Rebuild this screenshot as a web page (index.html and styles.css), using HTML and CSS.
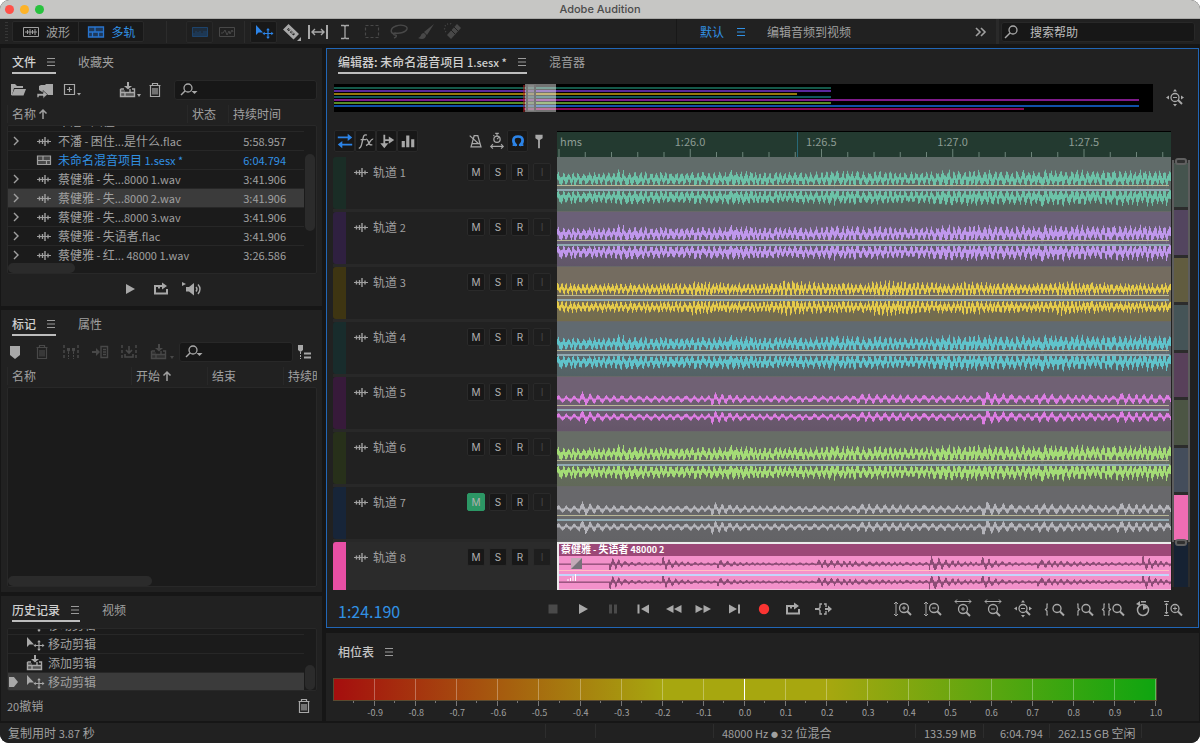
FILE: index.html
```html
<!DOCTYPE html>
<html lang="zh-CN">
<head>
    <meta charset="UTF-8">
    <meta name="viewport" content="width=device-width, initial-scale=1.0">
    <title>Adobe Audition</title>
    <link rel="stylesheet" href="styles.css">
</head>
<body>
    <!-- Icon sprite -->
    <svg class="sprite" aria-hidden="true">
        <symbol id="i-wavebox" viewBox="0 0 20 20"><path d="M2.500 5.500h15v9h-15zM4 10h12M6.500 8v4M9 7v6M11.500 8v4M14 7v6" fill="none" stroke="currentColor"/></symbol>
        <symbol id="i-multitrack" viewBox="0 0 20 20"><path d="M2.500 5h15v10h-15z" fill="currentColor" opacity=".35"/><path d="M2.500 5h15v10h-15zM2.500 10h15M9 5v5M6.500 10v5M12.500 10v5" fill="none" stroke="currentColor" stroke-width="1.300"/></symbol>
        <symbol id="i-session" viewBox="0 0 20 20"><path d="M3.500 6h13v8.500h-13z" fill="currentColor" opacity=".35"/><path d="M3.500 6h13v8.500h-13zM3.500 10.500h13M9 6v4M12.500 10v4" fill="none" stroke="currentColor" stroke-width="1.200"/></symbol>
        <symbol id="i-spectral" viewBox="0 0 20 20"><path d="M2 5h16v10H2z" fill="currentColor" opacity=".4"/><path d="M2.500 5.500h15v9h-15zM4 14v-3M6 14V9M8 14v-4M10 14V9M12 14v-3M14 14V9M16 14v-5" fill="none" stroke="currentColor"/></symbol>
        <symbol id="i-pitch" viewBox="0 0 20 20"><path d="M2.500 5.500h15v9h-15zM4 11h2l2-3 2 5 2-4 1 3 2-4 1 2" fill="none" stroke="currentColor"/></symbol>
        <symbol id="i-move" viewBox="0 0 20 20"><path d="M2 3v10l2.500-2.500H9z" fill="currentColor"/><path d="M14 7.500v8M10 11.500h8" stroke="currentColor" stroke-width="1.200"/><path d="M14 6l-1.800 2.200h3.600zM14 17l-1.800-2.200h3.600zM8.500 11.500l2.200-1.800v3.600zM19.500 11.500l-2.200-1.800v3.600z" fill="currentColor"/></symbol>
        <symbol id="i-razor" viewBox="0 0 20 20"><path fill-rule="evenodd" d="M7.500 2L18 12l-5.500 5.500L2 7.500zM7.500 6L6 7.500l6.500 6L14 12z" fill="currentColor"/><path d="M7.500 7l5 5M8 10l2-2M10.500 12l2-2" stroke="currentColor"/><path d="M20 15v4h-4z" fill="currentColor"/></symbol>
        <symbol id="i-slip" viewBox="0 0 20 20"><path d="M1 3v14M19 3v14" stroke="currentColor" stroke-width="2"/><path d="M4 10h12M7 7l-3 3 3 3M13 7l3 3-3 3" fill="none" stroke="currentColor" stroke-width="1.400"/></symbol>
        <symbol id="i-ibeam" viewBox="0 0 20 20"><path d="M6 3.500h3l1 1 1-1h3M10 4v12M6 16.500h3l1-1 1 1h3" fill="none" stroke="currentColor" stroke-width="1.300"/></symbol>
        <symbol id="i-marquee" viewBox="0 0 20 20"><path d="M3.500 3.500h13v12h-13z" fill="none" stroke="currentColor" stroke-width="1.200" stroke-dasharray="3 2"/></symbol>
        <symbol id="i-lasso" viewBox="0 0 20 20"><path d="M5 12C1 11 1 6 7 4s12 0 11 3-7 5-12 4c-2 0-2 2 0 2s2 2-1 3" fill="none" stroke="currentColor" stroke-width="1.400"/></symbol>
        <symbol id="i-brush" viewBox="0 0 20 20"><path d="M18 2L8 10l3 3zM8 11c-4 0-2 4-6 5 4 2 8 1 8-3z" fill="currentColor"/></symbol>
        <symbol id="i-heal" viewBox="0 0 20 20"><path d="M14 2l4 4L8 17l-4-4z" fill="currentColor"/><path d="M8 8l4 4M11 5l4 4" stroke="#212121"/><path d="M3 10a4 4 0 0 1 7-7" fill="none" stroke="currentColor" stroke-width="1.300" stroke-dasharray="1 2"/></symbol>
        <symbol id="i-menu" viewBox="0 0 10 10"><path d="M1 1.500h8M1 5h8M1 8.500h8" stroke="currentColor"/></symbol>
        <symbol id="i-folder" viewBox="0 0 20 20"><path d="M3 15V4h4l2 2h6v2H6l-2 7z" fill="currentColor"/><path d="M6.500 9H18l-2.500 6.500h-12z" fill="currentColor"/></symbol>
        <symbol id="i-import" viewBox="0 0 20 20"><path d="M4 10V6l2-1h4l1-1h7v11h-6z" fill="currentColor"/><path d="M2 17.500v-4h6v-3l4.500 4L8 18.500v-2.500H4v1.500z" fill="currentColor" stroke="#212121" stroke-width=".6"/></symbol>
        <symbol id="i-new" viewBox="0 0 20 20"><path d="M2.500 4.500h10v10h-10zM7.500 7v5M5 9.500h5" fill="none" stroke="currentColor" stroke-width="1.200"/><path d="M15 13h4l-2 2.500z" fill="currentColor"/></symbol>
        <symbol id="i-insert" viewBox="0 0 20 20"><path d="M9 2h2v4h3l-4 3.500L6 6h3z" fill="currentColor"/><path d="M2.500 9H6M14 9h2.500v7.500h-14V9M2.500 12.500h14M7 12v4M12 9v4" fill="none" stroke="currentColor" stroke-width="1.400"/><path d="M3 10h4v3h9v3H3z" fill="currentColor" opacity=".4"/></symbol>
        <symbol id="i-trash" viewBox="0 0 20 20"><path d="M4.500 5.500h11M7.500 5V3.500h5V5M5.500 6v10.500h9V6M8 8v6.500M10 8v6.500M12 8v6.500" fill="none" stroke="currentColor" stroke-width="1.200"/></symbol>
        <symbol id="i-search" viewBox="0 0 20 20"><circle cx="11" cy="8" r="4" fill="none" stroke="currentColor" stroke-width="1.300"/><path d="M8 11l-5 5" stroke="currentColor" stroke-width="1.500"/></symbol>
        <symbol id="i-searchdrop" viewBox="0 0 20 20"><circle cx="9" cy="8" r="4" fill="none" stroke="currentColor" stroke-width="1.300"/><path d="M6 11l-4 4" stroke="currentColor" stroke-width="1.500"/><path d="M12.500 11h6l-3 3z" fill="currentColor"/></symbol>
        <symbol id="i-wave" viewBox="0 0 20 20"><path d="M3 10.500h14" stroke="currentColor"/><path d="M5.500 8.500v4M8.500 8v5M11 6v9M14 8.500v4" stroke="currentColor" stroke-width="1.400"/></symbol>
        <symbol id="i-play" viewBox="0 0 20 20"><path d="M6 5l9 5-9 5z" fill="currentColor"/></symbol>
        <symbol id="i-loop" viewBox="0 0 20 20"><path d="M7 7H4v7.500h12V10" fill="none" stroke="currentColor" stroke-width="2"/><path d="M7 9.500V6h4V3.500L16 7l-5 3.500V8H9v1.500z" fill="currentColor"/></symbol>
        <symbol id="i-speaker" viewBox="0 0 20 20"><path d="M0 3l4 2-4 2zM4 8h3l5-4v12.500L7 12.500H4z" fill="currentColor"/><path d="M14 8q2 2 0 4.500M16 5.500q4 4.500 0 9.500" fill="none" stroke="currentColor" stroke-width="1.400"/></symbol>
        <symbol id="i-marker" viewBox="0 0 20 20"><path d="M5 4h10v9l-5 4-5-4z" fill="currentColor"/></symbol>
        <symbol id="i-markmerge" viewBox="0 0 20 20"><path d="M3 3v14M17 3v14" stroke="currentColor" stroke-width="1.500" stroke-dasharray="3 2"/><path d="M7.500 10v7M12.500 10v7" stroke="currentColor" stroke-dasharray="2 1"/><path d="M6 6h3v2.500L7.500 10 6 8.500zM11 6h3v2.500L12.500 10 11 8.500z" fill="currentColor"/></symbol>
        <symbol id="i-markinsert" viewBox="0 0 20 20"><path d="M2 9h4V6l4 4-4 4v-3H2z" fill="currentColor"/><path d="M11 4.500h6.500v11H11zM13 7.500h3M13 10h3M13 12.500h3" fill="none" stroke="currentColor" stroke-width="1.400"/></symbol>
        <symbol id="i-markexport" viewBox="0 0 20 20"><path d="M3 3v14M17 3v14" stroke="currentColor" stroke-width="1.500" stroke-dasharray="3 2"/><path d="M10 4v7M7 8l3 3 3-3M6 12v3h8v-3" fill="none" stroke="currentColor" stroke-width="1.600"/></symbol>
        <symbol id="i-marklist" viewBox="0 0 20 20"><path d="M3 3h5v5L5.500 10 3 8z" fill="currentColor"/><path d="M5.500 10v7" stroke="currentColor" stroke-dasharray="2 1"/><path d="M9 11.500h7M9 15.500h7" stroke="currentColor" stroke-width="2"/></symbol>
        <symbol id="i-swap" viewBox="0 0 20 20"><path d="M2 6h13M18 14H5" stroke="currentColor" stroke-width="2"/><path d="M13 2l5 4-5 4zM7 10l-5 4 5 4z" fill="currentColor"/></symbol>
        <symbol id="i-fx" viewBox="0 0 20 20"><path d="M2 18c3 0 3-4 4-8s1-8 5-6.500M4 8.500h6M10 8c3-1 2 8 7 6M18 8c-3-1-4 6-8 7" fill="none" stroke="currentColor" stroke-width="1.500"/></symbol>
        <symbol id="i-send" viewBox="0 0 20 20"><path d="M7 3v12M7 9h8" fill="none" stroke="currentColor" stroke-width="2"/><path d="M12 5l6 4-6 4zM2.500 12.500h9L7 18z" fill="currentColor"/></symbol>
        <symbol id="i-bars" viewBox="0 0 20 20"><path d="M3 10h3.500v7H3zM8 4h3.500v13H8zM13.500 8H17v9h-3.500z" fill="currentColor"/></symbol>
        <symbol id="i-metronome" viewBox="0 0 20 20"><path d="M8 4h4l3.500 12.500h-11zM6 13h8M3 4l10 9" fill="none" stroke="currentColor" stroke-width="1.400"/></symbol>
        <symbol id="i-timer" viewBox="0 0 20 20"><circle cx="10" cy="8" r="3.500" fill="none" stroke="currentColor" stroke-width="1.400"/><path d="M10 2v3M8 1.500h4M6 3.500l1 1M10 8l2-2M3 16h14M5.500 13.500L3 16l2.500 2.500M14.500 13.500L17 16l-2.500 2.500" fill="none" stroke="currentColor" stroke-width="1.200"/></symbol>
        <symbol id="i-magnet" viewBox="0 0 20 20"><path d="M8 15c-4-3-5-10 2-10s6 7 2 10" fill="none" stroke="currentColor" stroke-width="3"/><path d="M4 14.500h5M11 14.500h5" stroke="currentColor" stroke-width="2"/></symbol>
        <symbol id="i-pin" viewBox="0 0 20 20"><path d="M6 3h8v4L11 9v9H9V9L6 7z" fill="currentColor"/></symbol>
        <symbol id="i-stop" viewBox="0 0 20 20"><path d="M5.500 5.500h9v9h-9z" fill="currentColor"/></symbol>
        <symbol id="i-pause" viewBox="0 0 20 20"><path d="M6 5.500h3v9H6zM11 5.500h3v9h-3z" fill="currentColor"/></symbol>
        <symbol id="i-first" viewBox="0 0 20 20"><path d="M4.500 5.500h2v9h-2zM16 5.500v9L8 10z" fill="currentColor"/></symbol>
        <symbol id="i-rewind" viewBox="0 0 20 20"><path d="M10.500 6v8L3 10zM18.500 6v8l-7.500-4z" fill="currentColor"/></symbol>
        <symbol id="i-forward" viewBox="0 0 20 20"><path d="M2.500 6v8l7.500-4zM10.500 6v8l7.500-4z" fill="currentColor"/></symbol>
        <symbol id="i-last" viewBox="0 0 20 20"><path d="M6 5.500v9l8-4.500zM15 5.500h2v9h-2z" fill="currentColor"/></symbol>
        <symbol id="i-record" viewBox="0 0 20 20"><circle cx="11" cy="10" r="5.200" fill="currentColor"/></symbol>
        <symbol id="i-skip" viewBox="0 0 20 20"><path d="M9 5H7v3.500L5.500 10 7 11.500V15h2M11 5h2v3M11 15h2v-3" fill="none" stroke="currentColor" stroke-width="1.400"/><path d="M2 9h4v2H2zM12 9h3V6.500l4 3.500-4 3.500V11h-3z" fill="currentColor"/></symbol>
        <symbol id="i-vzoomin" viewBox="0 0 20 20"><path d="M3 3v14M1 5l2-2 2 2M1 15l2 2 2-2M9 9h4M11 7v4" fill="none" stroke="currentColor"/><circle cx="11" cy="9" r="4.500" fill="none" stroke="currentColor" stroke-width="1.300"/><path d="M14 12l4 4" stroke="currentColor" stroke-width="2"/></symbol>
        <symbol id="i-vzoomout" viewBox="0 0 20 20"><path d="M3 3v14M1 5l2-2 2 2M1 15l2 2 2-2M9 9h4" fill="none" stroke="currentColor"/><circle cx="11" cy="9" r="4.500" fill="none" stroke="currentColor" stroke-width="1.300"/><path d="M14 12l4 4" stroke="currentColor" stroke-width="2"/></symbol>
        <symbol id="i-hzoomin" viewBox="0 0 20 20"><path d="M2 2.500h16M4 .5l-2 2 2 2M16 .5l2 2-2 2M8 10h4M10 8v4" fill="none" stroke="currentColor"/><circle cx="10" cy="10" r="4.500" fill="none" stroke="currentColor" stroke-width="1.300"/><path d="M13 13l4 4" stroke="currentColor" stroke-width="2"/></symbol>
        <symbol id="i-hzoomout" viewBox="0 0 20 20"><path d="M2 2.500h16M4 .5l-2 2 2 2M16 .5l2 2-2 2M8 10h4" fill="none" stroke="currentColor"/><circle cx="10" cy="10" r="4.500" fill="none" stroke="currentColor" stroke-width="1.300"/><path d="M13 13l4 4" stroke="currentColor" stroke-width="2"/></symbol>
        <symbol id="i-zoomfull" viewBox="0 0 20 20"><circle cx="10" cy="9.500" r="4" fill="none" stroke="currentColor" stroke-width="1.300"/><path d="M13 12l4 4" stroke="currentColor" stroke-width="2"/><path d="M8 9.500h4" stroke="currentColor"/><path d="M10 1L8 3.500h4zM10 18.500L8 16h4zM1 9.500l3-2v4zM19 9.500l-3-2v4z" fill="currentColor"/></symbol>
        <symbol id="i-zoomin-l" viewBox="0 0 20 20"><circle cx="14" cy="9.500" r="4" fill="none" stroke="currentColor" stroke-width="1.400"/><path d="M17 12.500l4 4" stroke="currentColor" stroke-width="2"/><path d="M5 5H4v4l-1.500 1.500L4 12v4h1" fill="none" stroke="currentColor" stroke-width="1.200"/></symbol>
        <symbol id="i-zoomin-r" viewBox="0 0 20 20"><circle cx="13" cy="9.500" r="4" fill="none" stroke="currentColor" stroke-width="1.400"/><path d="M16 12.500l4 4" stroke="currentColor" stroke-width="2"/><path d="M4 5h1v4l1.500 1.500L5 12v4H4" fill="none" stroke="currentColor" stroke-width="1.200"/></symbol>
        <symbol id="i-zoomsel" viewBox="0 0 20 20"><circle cx="14" cy="9.500" r="4" fill="none" stroke="currentColor" stroke-width="1.400"/><path d="M17 12.500l4 4" stroke="currentColor" stroke-width="2"/><path d="M2 5H1v4l-1.500 1.500L1 12v4h1M5 5h1v4l1.500 1.500L6 12v4H5" fill="none" stroke="currentColor" stroke-width="1.200"/></symbol>
        <symbol id="i-zoomtime" viewBox="0 0 20 20"><circle cx="10" cy="11" r="5.500" fill="none" stroke="currentColor" stroke-width="1.500"/><path d="M10 11V6a5 5 0 0 1 4.500 3zM8 2h5v1.500H8zM3 5l4-3v5z" fill="currentColor"/></symbol>
        <symbol id="i-zoomtrack" viewBox="0 0 20 20"><circle cx="12" cy="9.500" r="4" fill="none" stroke="currentColor" stroke-width="1.300"/><path d="M15 12.500l4 4" stroke="currentColor" stroke-width="2"/><path d="M1 2.500h5M1 16.500h5M3.500 4v11M2 6l1.500-2L5 6M2 13l1.500 2L5 13M10 9.500h4M12 7.500v4" fill="none" stroke="currentColor"/></symbol>
    </svg>

    <div class="window">
        <header class="titlebar">
            <div class="lights"><span class="light red"></span><span class="light amber"></span><span class="light green"></span></div>
            <h1>Adobe Audition</h1>
        </header>

        <nav class="toolbar">
            <span class="grip"></span>
            <div class="modes">
                <button class="mode"><svg><use href="#i-wavebox"/></svg>波形</button>
                <button class="mode active"><svg><use href="#i-multitrack"/></svg>多轨</button>
            </div>
            <div class="views">
                <button class="tool boxed spectral" aria-label="频谱"><svg><use href="#i-spectral"/></svg></button>
                <button class="tool dim" aria-label="音高"><svg><use href="#i-pitch"/></svg></button>
            </div>
            <div class="tools">
                <button class="tool boxed active" aria-label="移动"><svg><use href="#i-move"/></svg></button>
                <button class="tool" aria-label="切断"><svg><use href="#i-razor"/></svg></button>
                <button class="tool" aria-label="滑动"><svg><use href="#i-slip"/></svg></button>
                <button class="tool" aria-label="时间选择"><svg><use href="#i-ibeam"/></svg></button>
                <button class="tool dim" aria-label="框选"><svg><use href="#i-marquee"/></svg></button>
                <button class="tool dim" aria-label="套索"><svg><use href="#i-lasso"/></svg></button>
                <button class="tool dim" aria-label="画笔"><svg><use href="#i-brush"/></svg></button>
                <button class="tool dim" aria-label="修复"><svg><use href="#i-heal"/></svg></button>
            </div>
            <div class="workspaces">
                <button class="workspace active">默认<svg class="menu"><use href="#i-menu"/></svg></button>
                <button class="workspace">编辑音频到视频</button>
                <button class="more" aria-label="更多"><svg viewBox="0 0 12 10"><path d="M1 1l4 4-4 4M6 1l4 4-4 4" fill="none" stroke="currentColor" stroke-width="1.600"/></svg></button>
            </div>
            <label class="field help"><svg><use href="#i-search"/></svg><input type="text" placeholder="搜索帮助" aria-label="搜索帮助"></label>
        </nav>

        <main class="main">
            <div class="side">
                <section class="panel files">
                    <div class="tabs">
                        <button class="tab active">文件<svg class="menu"><use href="#i-menu"/></svg></button>
                        <button class="tab">收藏夹</button>
                    </div>
                    <div class="actions">
                        <button class="tool" aria-label="打开"><svg><use href="#i-folder"/></svg></button>
                        <button class="tool" aria-label="导入"><svg><use href="#i-import"/></svg></button>
                        <button class="tool" aria-label="新建"><svg><use href="#i-new"/></svg></button>
                        <button class="tool drop insert" aria-label="插入到多轨"><svg><use href="#i-insert"/></svg></button>
                        <button class="tool" aria-label="删除"><svg><use href="#i-trash"/></svg></button>
                        <label class="field"><svg><use href="#i-searchdrop"/></svg><input type="text" aria-label="搜索文件"></label>
                    </div>
                    <div class="cols file-cols"><span>名称<svg class="sort" viewBox="0 0 10 12"><path d="M5 11V2M1.500 5.500L5 2l3.500 3.500" fill="none" stroke="currentColor" stroke-width="1.500"/></svg></span><span>状态</span><span>持续时间</span></div>
                    <div class="list">
                        <table class="file-table">
                            <tbody id="file-rows"></tbody>
                        </table>
                        <span class="vbar"></span>
                        <span class="hbar"></span>
                    </div>
                    <div class="preview">
                        <button class="tool" aria-label="播放"><svg><use href="#i-play"/></svg></button>
                        <button class="tool" aria-label="循环"><svg><use href="#i-loop"/></svg></button>
                        <button class="tool" aria-label="自动播放"><svg><use href="#i-speaker"/></svg></button>
                    </div>
                </section>

                <section class="panel markers">
                    <div class="tabs">
                        <button class="tab active">标记<svg class="menu"><use href="#i-menu"/></svg></button>
                        <button class="tab">属性</button>
                    </div>
                    <div class="actions">
                        <button class="tool" aria-label="添加标记"><svg><use href="#i-marker"/></svg></button>
                        <button class="tool dim" aria-label="删除标记"><svg><use href="#i-trash"/></svg></button>
                        <button class="tool dim" aria-label="合并"><svg><use href="#i-markmerge"/></svg></button>
                        <button class="tool dim" aria-label="插入播放列表"><svg><use href="#i-markinsert"/></svg></button>
                        <button class="tool dim" aria-label="导出标记"><svg><use href="#i-markexport"/></svg></button>
                        <button class="tool dim drop" aria-label="插入到多轨"><svg><use href="#i-insert"/></svg></button>
                        <label class="field"><svg><use href="#i-searchdrop"/></svg><input type="text" aria-label="搜索标记"></label>
                        <button class="tool" aria-label="标记列表"><svg><use href="#i-marklist"/></svg></button>
                    </div>
                    <div class="cols marker-cols"><span>名称</span><span>开始<svg class="sort" viewBox="0 0 10 12"><path d="M5 11V2M1.500 5.500L5 2l3.500 3.500" fill="none" stroke="currentColor" stroke-width="1.500"/></svg></span><span>结束</span><span>持续时间</span></div>
                    <div class="list"><span class="hbar wide"></span></div>
                </section>

                <section class="panel history">
                    <div class="tabs">
                        <button class="tab active">历史记录<svg class="menu"><use href="#i-menu"/></svg></button>
                        <button class="tab">视频</button>
                    </div>
                    <div class="list">
                        <ul class="steps">
                            <li><svg><use href="#i-move"/></svg>移动剪辑</li>
                            <li><svg><use href="#i-move"/></svg>移动剪辑</li>
                            <li><svg><use href="#i-insert"/></svg>添加剪辑</li>
                            <li class="current"><svg><use href="#i-move"/></svg>移动剪辑</li>
                        </ul>
                        <span class="vbar"></span>
                    </div>
                    <div class="undo"><span class="count"><span class="latin">20</span>撤销</span><button class="tool" aria-label="清除"><svg><use href="#i-trash"/></svg></button></div>
                </section>
            </div>

            <div class="work">
                <section class="panel editor">
                    <div class="tabs">
                        <button class="tab active"><span>编辑器: 未命名混音项目 <span class="latin">1.sesx *</span></span><svg class="menu"><use href="#i-menu"/></svg></button>
                        <button class="tab">混音器</button>
                    </div>
                    <div class="overview-row">
                        <svg class="overview" id="overview" viewBox="0 0 819 28" preserveAspectRatio="none"></svg>
                        <button class="tool" aria-label="缩放全部"><svg><use href="#i-zoomfull"/></svg></button>
                    </div>
                    <div class="session">
                        <div class="track-tools">
                            <div class="group">
                                <button class="tool boxed active" aria-label="输入输出"><svg><use href="#i-swap"/></svg></button>
                                <button class="tool boxed" aria-label="效果"><svg><use href="#i-fx"/></svg></button>
                                <button class="tool boxed" aria-label="发送"><svg><use href="#i-send"/></svg></button>
                                <button class="tool boxed" aria-label="均衡"><svg><use href="#i-bars"/></svg></button>
                            </div>
                            <div class="group">
                                <button class="tool" aria-label="节拍器"><svg><use href="#i-metronome"/></svg></button>
                                <button class="tool" aria-label="伸缩"><svg><use href="#i-timer"/></svg></button>
                                <button class="tool boxed active" aria-label="对齐"><svg><use href="#i-magnet"/></svg></button>
                                <button class="tool" aria-label="标记"><svg><use href="#i-pin"/></svg></button>
                            </div>
                        </div>
                        <div class="ruler"><svg id="ruler" viewBox="0 0 614 25" preserveAspectRatio="none"></svg><span class="unit">hms</span><div class="times" id="times"></div></div>
                        <div class="tracks" id="tracks"></div>
                        <div class="track-nav" id="track-nav"></div>
                    </div>
                    <div class="transport">
                        <output class="time">1:24.190</output>
                        <div class="group">
                            <button class="tool dim" aria-label="停止"><svg><use href="#i-stop"/></svg></button>
                            <button class="tool" aria-label="播放"><svg><use href="#i-play"/></svg></button>
                            <button class="tool dim" aria-label="暂停"><svg><use href="#i-pause"/></svg></button>
                            <button class="tool" aria-label="开头"><svg><use href="#i-first"/></svg></button>
                            <button class="tool" aria-label="快退"><svg><use href="#i-rewind"/></svg></button>
                            <button class="tool" aria-label="快进"><svg><use href="#i-forward"/></svg></button>
                            <button class="tool" aria-label="结尾"><svg><use href="#i-last"/></svg></button>
                            <button class="tool record" aria-label="录制"><svg><use href="#i-record"/></svg></button>
                            <button class="tool" aria-label="循环"><svg><use href="#i-loop"/></svg></button>
                            <button class="tool" aria-label="跳过"><svg><use href="#i-skip"/></svg></button>
                        </div>
                        <div class="group zooms">
                            <button class="tool" aria-label="垂直放大"><svg><use href="#i-vzoomin"/></svg></button>
                            <button class="tool" aria-label="垂直缩小"><svg><use href="#i-vzoomout"/></svg></button>
                            <button class="tool" aria-label="水平放大"><svg><use href="#i-hzoomin"/></svg></button>
                            <button class="tool" aria-label="水平缩小"><svg><use href="#i-hzoomout"/></svg></button>
                            <button class="tool" aria-label="全部"><svg><use href="#i-zoomfull"/></svg></button>
                            <button class="tool" aria-label="入点"><svg><use href="#i-zoomin-l"/></svg></button>
                            <button class="tool" aria-label="出点"><svg><use href="#i-zoomin-r"/></svg></button>
                            <button class="tool" aria-label="选区"><svg><use href="#i-zoomsel"/></svg></button>
                            <button class="tool" aria-label="时间"><svg><use href="#i-zoomtime"/></svg></button>
                            <button class="tool" aria-label="轨道"><svg><use href="#i-zoomtrack"/></svg></button>
                        </div>
                    </div>
                </section>

                <section class="panel phase">
                    <h2>相位表<svg class="menu"><use href="#i-menu"/></svg></h2>
                    <div class="meter" id="meter"></div>
                </section>
            </div>
        </main>

        <footer class="status">
            <span class="message">复制用时 <span class="latin">3.87</span> 秒</span>
            <span class="cell c50"></span>
            <span class="cell c118"></span>
            <span class="cell c202"><span class="latin">48000 Hz</span> <span class="dot">●</span> <span class="latin">32</span> 位混合</span>
            <span class="cell c68"><span class="latin">133.59 MB</span></span>
            <span class="cell c66"><span class="latin">6:04.794</span></span>
            <span class="cell c92"><span class="latin">262.15 GB</span> 空闲</span>
            <span class="cell c60"></span>
        </footer>
    </div>
    <script src="script.js"></script>
</body>
</html>
```
FILE: styles.css
```css
* {
    margin: 0;
    padding: 0;
    box-sizing: border-box;
}

body {
    font-family: "Noto Sans CJK SC", "Noto Sans", sans-serif;
    font-size: 12px;
    line-height: 18px;
    color: #a0a0a0;
    background-color: #fff;
}

button, input {
    font: inherit;
    color: inherit;
    background: none;
    border: none;
    outline: none;
}

.sprite {
    display: none;
}

svg {
    display: block;
    width: 20px;
    height: 20px;
    flex: none;
    overflow: visible;
}

symbol {
    overflow: visible;
}

svg.menu {
    width: 10px;
    height: 10px;
}

.latin {
    font-size: 11px;
}

.window {
    height: 100vh;
    display: flex;
    flex-direction: column;
    background-color: #161616;
    border-radius: 9px;
    overflow: hidden;
}

/* Title bar */
.titlebar {
    height: 19px;
    flex: none;
    display: grid;
    grid-template-columns: 1fr auto 1fr;
    align-items: center;
    background-color: #c6c6c4;
    border-bottom: 1px solid #a9a9a7;
}

.titlebar h1 {
    font: 500 11px/18px Inter, sans-serif;
    color: #4b4b4b;
}

.lights {
    display: flex;
    gap: 6px;
    padding-left: 5px;
}

.light {
    width: 9px;
    height: 9px;
    border-radius: 50%;
}

.red { background-color: #ff5149; }
.amber { background-color: #fdb328; }
.green { background-color: #28c23e; }

/* Toolbar */
.toolbar {
    height: 25px;
    margin-bottom: 4px;
    flex: none;
    display: flex;
    align-items: center;
    background-color: #212121;
}

.tool {
    display: flex;
    align-items: center;
    justify-content: center;
    flex: none;
    width: 27px;
    height: 22px;
}

.tool svg {
    color: #a8a8a8;
}

.tool.dim svg {
    color: #484848;
}

.tool.boxed {
    background-color: #181818;
    border: 1px solid #282828;
    border-radius: 2px;
}

.tool.active svg {
    color: #2c84e8;
}

.tool.spectral {
    background-color: #1f1f1f;
}

.tool.spectral svg {
    color: #1d436b;
}

.grip {
    width: 3px;
    height: 19px;
    margin: 0 4px 0 5px;
    background: repeating-linear-gradient(#363636 0 1px, #212121 1px 3px);
}

.modes {
    display: flex;
    height: 21px;
    background-color: #191919;
    border: 1px solid #292929;
    border-radius: 2px;
}

.mode {
    width: 65px;
    display: flex;
    align-items: center;
    justify-content: center;
    gap: 5px;
}

.mode + .mode {
    border-left: 1px solid #292929;
}

.mode.active, .workspace.active {
    color: #3191e4;
}

.mode.active svg {
    color: #2874ce;
}

.views {
    display: flex;
    margin-left: 22px;
    padding: 0 4px 0 19px;
    border-left: 1px solid #2c2c2c;
}

.tools {
    display: flex;
    padding-left: 5px;
    border-left: 1px solid #2c2c2c;
}

.workspaces {
    flex: 1;
    align-self: stretch;
    margin-left: 210px;
    padding: 0 9px 0 23px;
    display: flex;
    align-items: center;
    gap: 21px;
    border-left: 1px solid #181818;
    border-right: 3px solid #2a2a2a;
}

.workspace {
    display: flex;
    align-items: center;
    gap: 12px;
    white-space: nowrap;
}

.more {
    margin-left: auto;
}

.more svg {
    width: 12px;
    height: 10px;
}

.field {
    display: flex;
    align-items: center;
    flex: 1;
    min-width: 0;
    height: 20px;
    padding-left: 4px;
    background-color: #171717;
    border: 1px solid #282828;
    border-radius: 3px;
}

.field input {
    flex: 1;
    width: 20px;
    margin-left: 8px;
}

.field input::placeholder {
    color: #bcbcbc;
    opacity: 1;
}

.help {
    flex: 0 0 194px;
    margin: 0 5px 0 2px;
    padding-left: 0;
}

.field svg {
    color: #a8a8a8;
}

/* Panels */
.main {
    flex: 1;
    min-height: 0;
    display: grid;
    grid-template-columns: 321px 1fr;
    gap: 4px;
    padding: 0 1px;
    margin-bottom: 2px;
}

.side, .work {
    min-width: 0;
    min-height: 0;
    display: flex;
    flex-direction: column;
    gap: 4px;
}

.panel {
    display: flex;
    flex-direction: column;
    background-color: #212121;
    min-height: 0;
}

.files { flex: 0 0 258px; }
.markers { flex: 1; }
.history { flex: 0 0 125px; }

.tabs {
    display: flex;
    gap: 22px;
    height: 26px;
    flex: none;
    padding-left: 11px;
}

.tab {
    display: flex;
    align-items: center;
    gap: 10px;
    padding-top: 2px;
    border-bottom: 2px solid transparent;
    white-space: nowrap;
}

.tab.active {
    color: #d0d0d0;
    font-weight: 500;
    border-bottom-color: #bdbdbd;
}

.tab .menu, h2 .menu {
    color: #9a9a9a;
}

.side .panel {
    padding: 0 5px 0 6px;
}

.side .tabs {
    padding-left: 5px;
}

.side .tab {
    padding-top: 4px;
}

.actions {
    display: flex;
    align-items: center;
    height: 31px;
    flex: none;
}

.files .actions .tool:first-child {
    margin-left: -3px;
}

.files .actions .insert {
    margin-left: 29px;
}

.files .field {
    margin-left: 6px;
}

.drop {
    position: relative;
}

.drop::after {
    content: "";
    position: absolute;
    right: 0;
    bottom: 4px;
    border: 2px solid transparent;
    border-top: 3px solid #a8a8a8;
    border-bottom: 0;
}

.drop.dim::after {
    border-top-color: #484848;
}

.cols {
    display: grid;
    height: 20px;
    flex: none;
    align-items: start;
    overflow: hidden;
    white-space: nowrap;
}

.cols span {
    display: flex;
    align-items: center;
    gap: 2px;
    padding-left: 4px;
    border-left: 1px solid #282828;
}

.cols .sort {
    width: 10px;
    height: 12px;
}

.file-cols {
    grid-template-columns: 1fr 41px 89px;
}

.list {
    position: relative;
    flex: 1;
    min-height: 0;
    overflow: hidden;
    background-color: #1b1b1b;
    border: 1px solid #282828;
    border-radius: 2px;
}

.vbar, .hbar {
    position: absolute;
    border-radius: 5px;
    background-color: #2b2b2b;
}

.vbar {
    right: 1px;
    width: 10px;
    top: 28px;
    height: 77px;
}

.hbar {
    left: 0;
    bottom: 0;
    width: 67px;
    height: 10px;
}

.files .list {
    flex: 0 0 149px;
}

/* The list is scrolled down by part of a row */
.file-table {
    width: calc(100% - 12px);
    margin-top: -14px;
    border-collapse: collapse;
    table-layout: fixed;
}

.file-table td {
    height: 19px;
    line-height: 18px;
    border-bottom: 1px solid #272727;
    white-space: nowrap;
}

.file-table .expand { width: 26px; padding-left: 5px; }
.file-table .kind { width: 24px; }
.file-table .length { width: 80px; padding-right: 18px; text-align: right; font-size: 11px; }

.file-table tr.selected td, .steps .current {
    background-color: #3b3b3b;
}

.file-table tr.session-file td {
    color: #3191e4;
}

.file-table tr:last-child td {
    border-bottom: none;
}

.file-table svg {
    margin: -1px 0;
    color: #a0a0a0;
}

.file-table .expand svg {
    width: 6px;
    height: 10px;
}

.preview {
    display: flex;
    flex: 1;
    align-items: center;
    justify-content: center;
    gap: 4px;
    padding: 0 3px 2px 0;
}

.markers .actions .tool {
    width: 29px;
}

.markers .actions .tool:first-child {
    width: 24px;
    margin-left: -4px;
}

.markers .actions .drop {
    width: 31px;
}

.markers .actions .tool:last-child {
    width: 24px;
}

.markers .cols {
    grid-template-columns: 124px 76px 76px 1fr;
}

.markers .field {
    margin-left: 5px;
}

.markers .list {
    margin-bottom: 5px;
}

.hbar.wide {
    width: 144px;
}

.history .list {
    flex: 0 0 63px;
    margin-top: 6px;
}

.history .vbar {
    top: auto;
    bottom: 0;
    height: 25px;
}

.steps {
    list-style: none;
    width: calc(100% - 12px);
    margin-top: -13px;
}

.steps li {
    position: relative;
    display: flex;
    align-items: center;
    gap: 3px;
    height: 19px;
    padding-left: 17px;
    border-bottom: 1px solid #272727;
}

.steps svg {
    color: #a8a8a8;
}

.steps .current::before {
    content: "";
    position: absolute;
    left: 1px;
    width: 9px;
    height: 10px;
    background-color: #a8a8a8;
    clip-path: polygon(0 0, 55% 0, 100% 50%, 55% 100%, 0 100%);
}

.undo {
    display: flex;
    flex: 1;
    align-items: center;
    justify-content: space-between;
}

/* Editor */
.editor {
    flex: 1;
    border: 1px solid #2166b6;
}

.editor .tabs {
    height: 25px;
}

.overview-row {
    display: flex;
    align-items: center;
    gap: 8px;
    padding: 10px 10px 0 7px;
}

.overview {
    flex: 1;
    height: 28px;
    min-width: 0;
    background-color: #000;
    overflow: hidden;
}

.session {
    flex: 1;
    min-height: 0;
    display: grid;
    grid-template-columns: 224px 1fr 27px;
    grid-template-rows: 26px 1fr;
    padding-left: 6px;
    margin-top: 19px;
}

.track-tools {
    display: flex;
    justify-content: space-between;
    padding: 0 8px 0 1px;
    margin-top: -1px;
}

.group {
    display: flex;
}

.track-tools .tool {
    width: 21px;
}

.track-tools svg {
    width: 18px;
    height: 18px;
}

.ruler {
    position: relative;
    background-color: #233a30;
    border-top: 1px solid #000;
    color: #8d9c94;
    font-size: 11px;
    line-height: 18px;
}

.ruler svg {
    position: absolute;
    width: 100%;
    height: 25px;
}

.unit {
    position: absolute;
    left: 3px;
}

.times span {
    position: absolute;
    transform: translateX(-50%);
}

.tracks {
    grid-column: 1 / 3;
    min-height: 0;
    overflow: hidden;
    background-color: #282828;
}

.track {
    display: grid;
    grid-template-columns: 224px 1fr;
    height: 55px;
}

.track-head {
    display: flex;
    align-items: flex-start;
    height: 52px;
    background-color: #212121;
    padding-right: 6px;
}

.strip {
    width: 13px;
    align-self: stretch;
    margin-right: 5px;
    border-radius: 3px 0 0 3px;
}

.track-head svg {
    margin-top: 5px;
    color: #a0a0a0;
}

.track-name {
    flex: 1;
    margin: 6px 0 0 2px;
}

.switches {
    display: flex;
    gap: 4px;
    padding-top: 6px;
}

.switch {
    width: 18px;
    height: 18px;
    font: 400 10px/16px Inter, sans-serif;
    color: #b0b0b0;
    background-color: #181818;
    border: 1px solid #2a2a2a;
    border-radius: 2px;
}

.switch:last-child {
    color: #454545;
    background-color: #1e1e1e;
}

.switch.muted {
    background-color: #2c9765;
    border-color: #2c9765;
}

.track.selected .track-head {
    background-color: #2b2b2b;
}

.lane {
    position: relative;
    min-width: 0;
}

.lane svg {
    width: 100%;
    height: 55px;
    overflow: hidden;
}

.clip-name {
    position: absolute;
    left: 4px;
    top: 1px;
    font-size: 10px;
    line-height: 12px;
    font-weight: 700;
    color: #fff;
}

.clip-name .latin {
    font-size: 9px;
}

.track-nav {
    position: relative;
    display: flex;
    flex-direction: column;
    gap: 3px;
    width: 18px;
    margin: 3px 0 3px 1px;
    padding-top: 3px;
    background: #2c2c2c linear-gradient(90deg, #5d5d5d 2px, #2c2c2c 2px 16px, #5d5d5d 16px) top / 100% 382px no-repeat;
}

.track-nav span {
    flex: 1;
    margin: 0 2px;
}

.track-nav i {
    position: absolute;
    left: 3px;
    top: -2px;
    width: 12px;
    height: 7px;
    border: 2px solid #606060;
    background-color: #303030;
    border-radius: 3px;
}

.track-nav i:last-child {
    top: 379px;
}

.transport {
    display: flex;
    align-items: center;
    height: 37px;
    flex: none;
    padding: 0 10px 0 11px;
}

.transport .tool {
    width: 30px;
}

.transport .dim svg {
    color: #4a4a4a;
}

.transport .record svg {
    color: #fa3432;
}

.time {
    width: 200px;
    font-size: 16px;
    line-height: 24px;
    padding-top: 4px;
    color: #3191e4;
}

.zooms {
    margin-left: auto;
}

/* Phase meter */
.phase {
    flex: 0 0 88px;
    margin-top: 1px;
    padding: 10px 42px 0 7px;
}

.phase h2 {
    display: flex;
    align-items: center;
    gap: 10px;
    padding-left: 5px;
    font-size: 12px;
    font-weight: 500;
    color: #c4c4c4;
}

.meter {
    display: grid;
    grid-template-columns: repeat(20, 1fr);
    height: 23px;
    margin-top: 17px;
    background: linear-gradient(90deg, #a50e0e, #a7a70f 40%, #a7a70f 60%, #0ea510);
    border: 1px solid #5a4a30;
}

.band {
    position: relative;
    border-right: 1px solid rgba(255, 255, 255, 0.3);
}

.band.zero {
    border-right-color: #fff;
}

.band::before, .band::after {
    content: "";
    position: absolute;
    top: 22px;
    right: -1px;
    width: 1px;
    height: 5px;
    background-color: #777;
}

.band::before {
    right: 50%;
    height: 2px;
}

.band span {
    position: absolute;
    left: 100%;
    top: 26px;
    width: 30px;
    margin-left: -14px;
    text-align: center;
    font-size: 9px;
    line-height: 16px;
}

/* Status bar */
.status {
    display: flex;
    flex: none;
    height: 20px;
    background-color: #212121;
    padding-top: 1px;
    white-space: nowrap;
}

.message {
    flex: 1;
    padding-left: 8px;
}

.cell {
    height: 14px;
    line-height: 18px;
    border-left: 1px solid #2d2d2d;
    padding-left: 8px;
}

.dot {
    font-size: 7px;
    vertical-align: 1px;
}

.c50 { width: 50px; }
.c118 { width: 118px; }
.c202 { width: 202px; }
.c68 { width: 68px; }
.c66 { width: 66px; padding-left: 16px; }
.c92 { width: 92px; }
.c60 { width: 59px; }
```
FILE: script.js
```js
const files = [
    ['不潘 - 困住... 48000 2.wav', '5:58.957'],
    ['不潘 - 困住...是什么.flac', '5:58.957'],
    ['未命名混音项目 1.sesx *', '6:04.794', 'session-file'],
    ['蔡健雅 - 失...8000 1.wav', '3:41.906'],
    ['蔡健雅 - 失...8000 2.wav', '3:41.906', 'selected'],
    ['蔡健雅 - 失...8000 3.wav', '3:41.906'],
    ['蔡健雅 - 失语者.flac', '3:41.906'],
    ['蔡健雅 - 红... 48000 1.wav', '3:26.586']
];

const tracks = [
    { strip: '#1a2d26', top: '#616c6a', bottom: '#53635c', wave: '#6cc2a8', nav: '#45544e', type: 'dense' },
    { strip: '#2f2040', top: '#6b6078', bottom: '#605668', wave: '#bf97ec', nav: '#53455f', type: 'dense' },
    { strip: '#3e3512', top: '#746c60', bottom: '#736c4b', wave: '#e5cb4a', nav: '#615c3f', type: 'middle' },
    { strip: '#182c2c', top: '#616a70', bottom: '#536265', wave: '#60c3cb', nav: '#455457', type: 'dense' },
    { strip: '#371a3a', top: '#706174', bottom: '#655569', wave: '#dd7de3', nav: '#58405a', type: 'sparse' },
    { strip: '#27301a', top: '#676d66', bottom: '#616958', wave: '#a4dc76', nav: '#4c5544', type: 'dense' },
    { strip: '#172539', top: '#68686b', bottom: '#636366', wave: '#b4b4ba', nav: '#444d5b', type: 'sparse', muted: true },
    { strip: '#e84fa5', top: '#f391ca', bottom: '#f391ca', wave: '#8b4c75', nav: '#ee6db3', type: 'quiet', selected: true }
];

// Bursts in each kind of recording: start, height, length
const bursts = {
    dense: [[60, 3, 10], [170, 3, 12], [270, 2, 30], [382, 2, 60], [480, 1, 80], [580, 1, 20]],
    middle: [[135, 3, 20], [224, 4, 30], [315, 4, 35], [405, 2, 25], [500, 3, 24]],
    sparse: [[22, 5, 12], [154, 4, 14], [300, 2, 50], [425, 5, 20], [480, 2, 50], [560, 2, 50]],
    quiet: [[52, 7, 10], [105, 6, 12], [160, 3, 14], [260, 3, 60], [372, 7, 18], [424, 6, 12], [480, 3, 40], [585, 7, 12]]
};

// Height of the quiet part, solid core, radians per pixel of the swing
const shapes = {
    dense: [6, 0.55, 1.2],
    middle: [5, 0.5, 1.5],
    sparse: [3, 0.35, 0.8],
    quiet: [1, 0.3, 1]
};

function wavePath(type, center, seed) {
    const [base, core, speed] = shapes[type];
    const random = () => {
        seed = (seed * 16807) % 2147483647;
        return seed / 2147483647;
    };
    let d = '';
    let phase = 0;
    for (let x = 0; x < 614; x++) {
        let height = base;
        bursts[type].forEach(([start, peak, length]) => {
            if (x >= start) height += peak * Math.exp(-(x - start) / length);
        });
        if (type === 'dense' && x > 382) height += 1;
        if (type === 'quiet' && x < 52) height = 0;
        height = Math.min(height, 8);
        phase += speed * (0.6 + 0.8 * random());
        const swing = Math.sin(phase) * (1 - core);
        const up = Math.max(0, height * (core * (0.5 + 0.8 * random()) + swing));
        const down = Math.max(0, height * (core * (0.5 + 0.8 * random()) - swing));
        d += `M${x + 0.5} ${(center - up - 0.5).toFixed(1)}V${(center + down + 0.5).toFixed(1)}`;
    }
    return d;
}

// Latin runs are set one size down beside the Chinese characters
function mixed(text) {
    return text.replace(/[ -~]+/g, run => `<span class="latin">${run}</span>`);
}

document.getElementById('file-rows').innerHTML = files.map(([name, length, state]) => {
    const session = state === 'session-file';
    const arrow = session ? '' : '<svg viewBox="0 0 6 10"><path d="M1 1l4 4-4 4" fill="none" stroke="currentColor" stroke-width="1.4"/></svg>';
    return `<tr class="${state || ''}"><td class="expand">${arrow}</td>
        <td class="kind"><svg><use href="#${session ? 'i-session' : 'i-wave'}"/></svg></td>
        <td>${mixed(name)}</td><td class="length">${length}</td></tr>`;
}).join('');

document.getElementById('tracks').innerHTML = tracks.map((track, i) => {
    const clip = track.selected;
    const seed = track.type.length * 7919;
    return `<div class="track ${clip ? 'selected' : ''}">
        <div class="track-head">
            <span class="strip" style="background-color:${track.strip}"></span>
            <svg><use href="#i-wave"/></svg>
            <span class="track-name">轨道 <span class="latin">${i + 1}</span></span>
            <div class="switches">
                <button class="switch ${track.muted ? 'muted' : ''}">M</button><button class="switch">S</button><button class="switch">R</button><button class="switch">I</button>
            </div>
        </div>
        <div class="lane">
            <svg viewBox="0 0 614 55" preserveAspectRatio="none">
                <linearGradient id="lane${i}" x2="0" y2="1"><stop offset=".3" stop-color="${track.top}"/><stop offset="1" stop-color="${track.bottom}"/></linearGradient>
                <rect width="614" height="55" fill="url(#lane${i})"/>
                ${clip ? '<path d="M0 0h614v14H0z" fill="#9c4877"/><path d="M0 22.500h614M0 40.500h614" stroke="#b06190"/>' : ''}
                <path d="${wavePath(track.type, 22, seed)}${wavePath(track.type, 40, seed)}" stroke="${track.wave}" fill="none"/>
                <rect y="28" width="612" height="5" fill="${clip ? '#f391ca' : track.top}" opacity=".85"/>
                <path d="M0 28.500h612" stroke="${clip ? '#ffc0c4' : '#b9b796'}"/>
                <path d="M0 33h612" stroke="${clip ? '#c4d5fa' : '#90a9b2'}" stroke-width="2"/>
                ${clip ? '<path d="M0 1h614M1 0v49M0 48.500h614" stroke="#ececec" stroke-width="2"/><path d="M14 16h11v11H14z" fill="#c4aab8"/><path d="M25 16v11H14z" fill="#77727a"/><path d="M11 39v-2M13.500 39v-3M16 39v-5M18.500 39v-7" stroke="#fff"/>' : '<path d="M0 54.500h614" stroke="#686868"/>'}
            </svg>
            ${clip ? `<span class="clip-name">${mixed('蔡健雅 - 失语者 48000 2')}</span>` : ''}
        </div>
    </div>`;
}).join('');

document.getElementById('track-nav').innerHTML = '<i></i>' +
    tracks.map(track => `<span style="background-color:${track.nav}"></span>`).join('') +
    '<span style="background-color:#162233"></span><i></i>';

// Session overview: color, start, end
const lines = [
    ['#14594a', 0, 497], ['#5a289c', 0, 497], ['#94780b', 0, 463], ['#10565c', 0, 497],
    ['#7e1a8a', 0, 805], ['#588a28', 0, 497], ['#0f50a8', 0, 805], ['#8c0856', 190, 690]
];
document.getElementById('overview').innerHTML = lines.map(([color, start, end], i) =>
    `<path d="M${start} ${4 + i * 3}H${end}" stroke="${color}" stroke-width="1.8"/>`).join('') +
    '<path d="M191 0h31v28h-31z" fill="#fff" opacity=".45"/><path d="M193 0h8v28h-8z" fill="#999" fill-opacity=".5" stroke="#777" stroke-width="2"/><path d="M190 1v27" stroke="#c02828"/>';

// Ruler: a label every half second, five ticks between
let ticks = '';
for (let i = 0; i < 24; i++) {
    const x = 2 + i * 26.25;
    ticks += `M${x} ${i % 5 === 0 ? 17 : 20}V25`;
}
document.getElementById('ruler').innerHTML = `<path d="${ticks}" stroke="#6d8479"/><path d="M240.500 0V25" stroke="#286878"/>`;
document.getElementById('times').innerHTML = ['1:26.0', '1:26.5', '1:27.0', '1:27.5'].map((text, i) =>
    `<span style="left:${(133 + i * 131.3) / 6.14}%">${text}</span>`).join('');

let meter = '';
for (let i = 1; i <= 20; i++) {
    meter += `<div class="band ${i === 10 ? 'zero' : ''}"><span>${((i - 10) / 10).toFixed(1)}</span></div>`;
}
document.getElementById('meter').innerHTML = meter;
```
